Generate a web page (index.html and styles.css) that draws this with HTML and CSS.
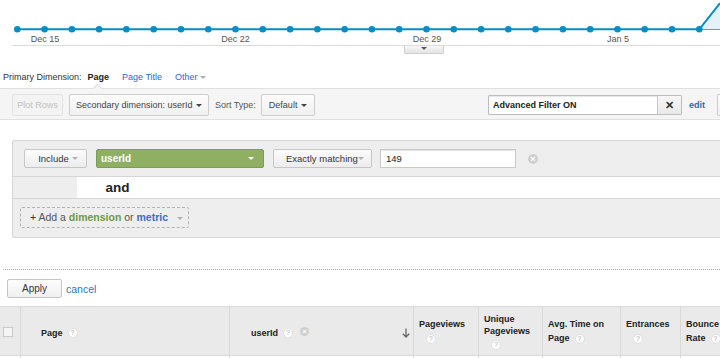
FILE: index.html
```html
<!DOCTYPE html>
<html lang="en">
<head>
<meta charset="utf-8"/>
<title>Pages - Advanced Filter</title>
<link rel="stylesheet" href="styles.css">
</head>
<body>

<div class="chart">
<svg width="720" height="46" viewBox="0 0 720 46">
  <polygon points="699.3,29.3 720,3.2 720,29.3" fill="#e3f1f9"/>
  <line x1="699" y1="29.5" x2="720" y2="29.5" stroke="#8c8c8c" stroke-width="1"/>
  <polyline points="17.3,29.3 699.3,29.3 720,3.2" fill="none" stroke="#058dc7" stroke-width="2"/>
  <g fill="#058dc7">
    <circle cx="17.3" cy="29.3" r="3.3"/>
    <circle cx="44.6" cy="29.3" r="3.3"/>
    <circle cx="71.9" cy="29.3" r="3.3"/>
    <circle cx="99.1" cy="29.3" r="3.3"/>
    <circle cx="126.4" cy="29.3" r="3.3"/>
    <circle cx="153.7" cy="29.3" r="3.3"/>
    <circle cx="181.0" cy="29.3" r="3.3"/>
    <circle cx="208.3" cy="29.3" r="3.3"/>
    <circle cx="235.5" cy="29.3" r="3.3"/>
    <circle cx="262.8" cy="29.3" r="3.3"/>
    <circle cx="290.1" cy="29.3" r="3.3"/>
    <circle cx="317.4" cy="29.3" r="3.3"/>
    <circle cx="344.7" cy="29.3" r="3.3"/>
    <circle cx="371.9" cy="29.3" r="3.3"/>
    <circle cx="399.2" cy="29.3" r="3.3"/>
    <circle cx="426.5" cy="29.3" r="3.3"/>
    <circle cx="453.8" cy="29.3" r="3.3"/>
    <circle cx="481.1" cy="29.3" r="3.3"/>
    <circle cx="508.3" cy="29.3" r="3.3"/>
    <circle cx="535.6" cy="29.3" r="3.3"/>
    <circle cx="562.9" cy="29.3" r="3.3"/>
    <circle cx="590.2" cy="29.3" r="3.3"/>
    <circle cx="617.5" cy="29.3" r="3.3"/>
    <circle cx="644.7" cy="29.3" r="3.3"/>
    <circle cx="672.0" cy="29.3" r="3.3"/>
    <circle cx="699.3" cy="29.3" r="3.3"/>
  </g>
  <text x="45" y="42" text-anchor="middle">Dec 15</text>
  <text x="235.5" y="42" text-anchor="middle">Dec 22</text>
  <text x="427" y="42" text-anchor="middle">Dec 29</text>
  <text x="618" y="42" text-anchor="middle">Jan 5</text>
  <line x1="12" y1="45.5" x2="720" y2="45.5" stroke="#dcdcdc" stroke-width="1"/>
</svg>
</div>
<div class="chart-foot"><span class="chart-toggle"><span class="caret"></span></span></div>

<div class="primary">
  <span class="primary-label">Primary Dimension:</span>
  <span class="dim current">Page</span>
  <a class="dim" href="#">Page Title</a>
  <a class="dim" href="#">Other <span class="caret light"></span></a>
</div>

<div class="toolbar">
  <span class="notch"></span>
  <button class="btn disabled plot">Plot Rows</button>
  <button class="btn secondary">Secondary dimension: userId <span class="caret"></span></button>
  <span class="tb-label">Sort Type:</span>
  <button class="btn sort">Default <span class="caret"></span></button>
  <div class="filter-state">
    <span class="filter-box">Advanced Filter ON</span>
    <span class="filter-clear">✕</span>
  </div>
  <a class="edit" href="#">edit</a>
  <span class="cut"></span>
</div>

<div class="filter-panel">
  <div class="cond-row">
    <button class="btn-sm include">Include <span class="caret light"></span></button>
    <div class="dim-select">userId <span class="caret white"></span></div>
    <button class="btn-sm match">Exactly matching<span class="caret light"></span></button>
    <div class="value-input">149</div>
    <span class="remove">×</span>
  </div>
  <div class="and-row">
    <div class="and-gap"></div>
    <div class="and-cell">and</div>
    <div class="and-bar"></div>
  </div>
  <div class="add-row">
    <div class="add-btn"><span class="plus">+</span> Add a <b class="green">dimension</b> or <b class="blue">metric</b> <span class="caret light"></span></div>
  </div>
</div>

<div class="sep"></div>

<div class="apply-row">
  <button class="btn apply">Apply</button>
  <a class="cancel" href="#">cancel</a>
</div>

<div class="grid-head">
  <div class="cell check"><span class="checkbox"></span></div>
  <div class="cell page-col">Page<span class="help">?</span></div>
  <div class="cell user-col">userId<span class="help">?</span><span class="remove small">×</span>
    <svg class="sort-arrow" width="8" height="10" viewBox="0 0 8 10"><path d="M4 0.5 V9 M0.8 5.8 L4 9 L7.2 5.8" fill="none" stroke="#666" stroke-width="1.3"/></svg>
  </div>
  <div class="cell metric w-pv">Pageviews<br><span class="help wrap">?</span></div>
  <div class="cell metric tight w-upv">Unique<br>Pageviews<br><span class="help wrap">?</span></div>
  <div class="cell metric w-avg">Avg. Time on<br>Page<span class="help">?</span></div>
  <div class="cell metric w-ent">Entrances<br><span class="help wrap">?</span></div>
  <div class="cell metric w-br">Bounce<br>Rate<span class="help">?</span></div>
</div>
<div class="grid-row">
  <div class="cell check"></div>
  <div class="cell page-col"></div>
  <div class="cell user-col"></div>
  <div class="cell w-pv"></div>
  <div class="cell w-upv"></div>
  <div class="cell w-avg"></div>
  <div class="cell w-ent"></div>
  <div class="cell w-br"></div>
</div>

</body>
</html>
```

FILE: styles.css
```css
* {
  box-sizing: border-box;
}
body {
  margin: 0;
  width: 720px;
  height: 358px;
  overflow: hidden;
  background: #fff;
  font-family: "Liberation Sans", Arial, sans-serif;
  font-size: 9px;
  color: #333;
}
a {
  text-decoration: none;
}
button {
  font-family: inherit;
  margin: 0;
}

/* chart */
.chart svg {
  display: block;
}
.chart text {
  font-size: 9px;
  fill: #555;
}
.chart-foot {
  height: 22px;
}
.chart-toggle {
  display: block;
  width: 40px;
  height: 8px;
  margin-left: 404px;
  border: 1px solid #cfcfcf;
  border-top: 0;
  border-radius: 0 0 2px 2px;
  background: linear-gradient(#f7f7f7, #e4e4e4);
  text-align: center;
  line-height: 0;
}
.chart-toggle .caret {
  margin-top: 1px;
  border-top-color: #555;
}
.caret {
  display: inline-block;
  width: 0;
  height: 0;
  border-left: 3px solid transparent;
  border-right: 3px solid transparent;
  border-top: 3px solid #444;
  vertical-align: middle;
}
.caret.light {
  border-top-color: #b0b0b0;
}
.caret.white {
  border-top-color: #fff;
}

/* primary dimension */
.primary {
  height: 18px;
  display: flex;
  align-items: center;
  padding-left: 3px;
}
.primary-label {
  color: #333;
  margin-right: 6px;
}
.dim {
  margin-right: 13px;
  color: #3366cc;
}
.dim.current {
  color: #222;
  font-weight: bold;
}

/* toolbar */
.toolbar {
  position: relative;
  margin-top: 2px;
  height: 32px;
  display: flex;
  align-items: flex-start;
  gap: 6px;
  padding: 5px 0 0 12px;
  background: #f5f5f5;
  border-top: 1px solid #e0e0e0;
  border-bottom: 1px solid #e0e0e0;
}
.notch {
  position: absolute;
  left: 94px;
  top: -4px;
  width: 7px;
  height: 7px;
  background: #f5f5f5;
  border-top: 1px solid #e0e0e0;
  border-left: 1px solid #e0e0e0;
  transform: rotate(45deg);
}
.btn {
  height: 22px;
  padding: 0 6px;
  border: 1px solid #cdcdcd;
  border-radius: 2px;
  background: linear-gradient(#fdfdfd, #f0f0f0);
  color: #444;
  font-size: 9px;
  white-space: nowrap;
  display: flex;
  align-items: center;
  justify-content: space-between;
}
.btn.disabled {
  color: #c2c2c2;
  border-color: #e2e2e2;
  background: #f3f3f3;
  width: 51px;
  padding: 0;
  justify-content: center;
}
.btn.secondary {
  width: 140px;
  padding: 0 6px 0 6px;
}
.btn.sort {
  width: 54px;
  padding: 0 7px;
  margin-left: -1px;
}
.tb-label {
  line-height: 22px;
  color: #555;
}
.filter-state {
  margin-left: auto;
  margin-top: 1px;
  width: 194px;
  height: 20px;
  display: flex;
  border: 1px solid #bdbdbd;
  border-radius: 1px;
  background: #fff;
}
.filter-box {
  flex: 1;
  padding-left: 4px;
  line-height: 18px;
  font-weight: bold;
  color: #222;
  box-shadow: inset 0 1px 1px #e6e6e6;
}
.filter-clear {
  width: 24px;
  border-left: 1px solid #c8c8c8;
  background: linear-gradient(#f7f7f7, #e9e9e9);
  text-align: center;
  line-height: 18px;
  font-size: 11px;
  font-weight: bold;
  color: #333;
}
.edit {
  margin-left: 1px;
  line-height: 22px;
  font-weight: bold;
  color: #1b6db5;
}
.cut {
  width: 3px;
  height: 22px;
  margin-left: 6px;
  border: 1px solid #cdcdcd;
  border-right: 0;
  border-radius: 2px 0 0 2px;
  background: linear-gradient(#fdfdfd, #f0f0f0);
}

/* filter panel */
.filter-panel {
  margin: 20px 0 0 12px;
  border: 1px solid #d6d6d6;
  border-right: 0;
  border-radius: 3px 0 0 3px;
  background: #eee;
  font-size: 10px;
}
.cond-row {
  height: 36px;
  display: flex;
  align-items: flex-start;
  gap: 9px;
  padding: 8px 0 0 11px;
  border-bottom: 1px solid #d6d6d6;
}
.btn-sm {
  height: 19px;
  border: 1px solid #c6c6c6;
  border-radius: 2px;
  background: linear-gradient(#fcfcfc, #ececec);
  color: #333;
  font-size: 9.5px;
  white-space: nowrap;
  display: flex;
  align-items: center;
  gap: 3px;
}
.btn-sm.include {
  width: 63px;
  justify-content: center;
  padding: 0 0 0 5px;
}
.btn-sm.match {
  width: 99px;
  padding: 0 0 0 12px;
  gap: 0;
}
.dim-select {
  width: 168px;
  height: 19px;
  padding: 0 9px 0 4px;
  border: 1px solid #7d9d53;
  border-radius: 2px;
  background: #8fb062;
  color: #fff;
  font-weight: bold;
  display: flex;
  align-items: center;
  justify-content: space-between;
}
.value-input {
  width: 136px;
  height: 19px;
  margin-left: -1px;
  padding-left: 5px;
  border: 1px solid #c9c9c9;
  background: #fff;
  box-shadow: inset 0 1px 1px #e4e4e4;
  line-height: 17px;
  font-size: 9.5px;
  color: #222;
}
.remove {
  width: 10px;
  height: 10px;
  margin: 5px 0 0 3px;
  border-radius: 50%;
  background: #cfcfcf;
  color: #fff;
  font-size: 9px;
  font-weight: bold;
  line-height: 10px;
  text-align: center;
}
.and-row {
  height: 22px;
  display: flex;
  border-bottom: 1px solid #d6d6d6;
}
.and-gap {
  width: 64px;
}
.and-cell {
  width: 81px;
  background: #fff;
  text-align: center;
  font-size: 13.5px;
  font-weight: bold;
  line-height: 21px;
  color: #222;
}
.and-bar {
  flex: 1;
  background: #fff;
}
.add-row {
  height: 38px;
  padding: 8px 0 0 7px;
}
.add-btn {
  width: 169px;
  height: 21px;
  padding-left: 9px;
  border: 1px dashed #b4b4b4;
  border-radius: 2px;
  font-size: 10.5px;
  line-height: 19px;
  color: #555;
}
.add-btn .plus {
  color: #333;
}
.add-btn .green {
  color: #6c9a45;
}
.add-btn .blue {
  color: #3a6dc4;
}
.add-btn .caret {
  margin-left: 6px;
}

/* apply */
.sep {
  margin: 31px 0 0 3px;
  border-top: 1px dotted #a8a8a8;
}
.apply-row {
  margin-top: 9px;
  display: flex;
  align-items: center;
  gap: 4px;
  padding-left: 7px;
}
.btn.apply {
  width: 55px;
  height: 19px;
  font-size: 10px;
  color: #333;
  justify-content: center;
  border-color: #c4c4c4;
}
.cancel {
  color: #2b78c0;
  font-size: 10.5px;
}

/* table */
.grid-head,
.grid-row {
  display: flex;
  width: 720px;
}
.grid-head {
  margin-top: 8px;
  height: 50px;
  border-top: 1px solid #d9d9d9;
  border-bottom: 1px solid #d9d9d9;
  background: #eaeaea;
  font-weight: bold;
  color: #222;
}
.grid-row {
  height: 2px;
}
.cell {
  flex: none;
  border-left: 1px solid #d9d9d9;
}
.cell.check {
  width: 20px;
  border-left: 0;
}
.grid-head .check {
  padding: 20px 0 0 3px;
}
.checkbox {
  display: block;
  width: 10px;
  height: 10px;
  border: 1px solid #c9c9c9;
  background: #f6f6f6;
}
.page-col {
  width: 209px;
}
.user-col {
  width: 184px;
}
.grid-head .page-col,
.grid-head .user-col {
  display: flex;
  align-items: center;
  padding: 4px 3px 0 20px;
}
.grid-head .user-col {
  padding-left: 21px;
}
.w-pv {
  width: 65px;
}
.w-upv {
  width: 64px;
}
.w-avg {
  width: 78px;
}
.w-ent {
  width: 60px;
}
.w-br {
  flex: 1;
  white-space: nowrap;
  overflow: hidden;
}
.metric {
  padding: 10px 0 0 5px;
  line-height: 14px;
}
.metric.tight {
  padding-top: 6px;
  line-height: 12px;
}
.metric.tight .help.wrap {
  margin-top: 2px;
}
.help {
  display: inline-block;
  width: 10px;
  height: 10px;
  margin-left: 5px;
  border-radius: 50%;
  background: #fff;
  border: 1px solid #e0e0e0;
  color: #aaa;
  font-size: 7px;
  font-weight: normal;
  line-height: 8px;
  text-align: center;
  vertical-align: middle;
}
.help.wrap {
  margin-left: 7px;
}
.remove.small {
  width: 9px;
  height: 9px;
  margin: -4px 0 0 7px;
  font-size: 8px;
  line-height: 9px;
}
.sort-arrow {
  margin-left: auto;
  display: block;
}
```
